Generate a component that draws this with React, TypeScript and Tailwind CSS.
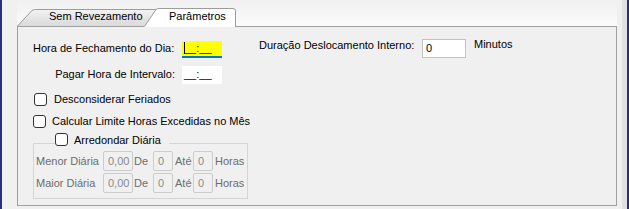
import React from 'react';

const Checkbox: React.FC = () => (
  <span className="block w-[13px] h-[13px] shrink-0 rounded-[3px] border border-[#333333] bg-white" />
);

const DisabledBox: React.FC<{ value: string; wide?: boolean }> = ({ value, wide }) => (
  <div
    className={`${wide ? 'w-[30px]' : 'w-[20px]'} h-[20px] shrink-0 flex items-center pl-[4px] rounded-[2px] border border-[#cccccc] bg-[#f0f0f0] text-[#8a8a8a] leading-[13px]`}
  >
    {value}
  </div>
);

const DiariaRow: React.FC<{ label: string; className?: string }> = ({ label, className }) => (
  <div className={`flex items-center h-[20px] pl-[2px] text-[#6d6d6d] ${className ?? ''}`}>
    <span className="w-[67px] leading-[13px]">{label}</span>
    <DisabledBox value="0,00" wide />
    <span className="ml-[1px] w-[19px] leading-[13px]">De</span>
    <DisabledBox value="0" />
    <span className="ml-[2px] w-[18px] leading-[13px]">Até</span>
    <DisabledBox value="0" />
    <span className="ml-[2px] leading-[13px]">Horas</span>
  </div>
);

export default function App() {
  return (
    <div className="w-[629px] h-[209px] flex bg-[#f0f0f0] border-x-2 border-[#2b2d85] text-[11px] text-black font-['Liberation_Sans',Arial,sans-serif] overflow-hidden">
      <div className="w-[620px] shrink-0 pl-[15px]">
        {/* Tab strip */}
        <div className="w-[600px] h-[26px] flex items-end bg-gradient-to-b from-[#f0f0f0] to-[#fbfbfb]">
          <div className="relative w-[141px] h-[17px] pl-[32px] pt-[1px] leading-[13px]">
            <svg className="absolute inset-0" width="141" height="17" viewBox="0 0 141 17">
              <defs>
                <linearGradient id="inact" x1="0" y1="0" x2="0" y2="1">
                  <stop offset="0" stopColor="#f3f3f3" />
                  <stop offset="1" stopColor="#d9d9d9" />
                </linearGradient>
              </defs>
              <path d="M0 17 L14.5 2 Q16 0.5 18.5 0.5 L141 0.5 L141 17 Z" fill="url(#inact)" />
              <path d="M0.5 17 L14.5 2 Q16 0.5 18.5 0.5 L141 0.5" fill="none" stroke="#9c9c9c" />
            </svg>
            <span className="relative">Sem Revezamento</span>
          </div>
          <div className="relative z-10 -ml-[14px] -mb-px w-[92px] h-[19px] pl-[25px] pt-[2px] leading-[13px]">
            <svg className="absolute inset-0" width="92" height="19" viewBox="0 0 92 19">
              <path d="M0 19 L12 1.5 Q13 0.5 15 0.5 L89 0.5 Q91.5 0.5 91.5 3 L91.5 19 Z" fill="#ffffff" />
              <path d="M0.5 18.5 L12 1.5 Q13 0.5 15 0.5 L89 0.5 Q91.5 0.5 91.5 3 L91.5 19" fill="none" stroke="#9c9c9c" />
            </svg>
            <span className="relative">Parâmetros</span>
          </div>
        </div>

        {/* Panel */}
        <div className="w-[600px] h-[180px] border border-[#a0a0a0] bg-[#f0f0f0] flex flex-col">
          {/* Row 1 */}
          <div className="flex items-start h-[20px] mt-[11px] pl-[15px]">
            <span className="w-[142px] mt-[4px] leading-[13px] whitespace-nowrap">Hora de Fechamento do Dia:</span>
            <div className="relative ml-[7px] mt-[3px] w-[40px] h-[17px] pl-[2px] pt-px bg-[#ffff00] border-b-2 border-[#0078d7] leading-[13px]">
              __:__
              <span className="absolute left-[2px] top-[1px] w-px h-[12px] bg-black" />
            </div>
            <span className="ml-[37px] mt-[1px] w-[163px] leading-[13px] whitespace-nowrap">Duração Deslocamento Interno:</span>
            <div className="mt-[1px] w-[44px] h-[19px] pl-[3px] pt-[2px] bg-white border border-[#c3c3c3] leading-[13px]">0</div>
            <span className="ml-[8px] leading-[13px]">Minutos</span>
          </div>

          {/* Row 2 */}
          <div className="flex items-start h-[18px] mt-[8px] pl-[15px]">
            <span className="w-[142px] mt-[2px] text-right leading-[13px] whitespace-nowrap">Pagar Hora de Intervalo:</span>
            <div className="ml-[7px] w-[40px] h-[18px] pl-[2px] pt-[2px] bg-white leading-[13px]">__:__</div>
          </div>

          {/* Checkboxes */}
          <label className="flex items-center h-[13px] mt-[9px] pl-[16px]">
            <Checkbox />
            <span className="ml-[7px] leading-[13px]">Desconsiderar Feriados</span>
          </label>
          <label className="flex items-center h-[13px] mt-[9px] pl-[15px]">
            <Checkbox />
            <span className="ml-[6px] leading-[13px]">Calcular Limite Horas Excedidas no Mês</span>
          </label>

          {/* Group box */}
          <div className="relative ml-[15px] mt-[15px] w-[215px] h-[56px] border border-[#d5d5d5] flex flex-col">
            <label className="absolute left-[21px] -top-[11px] flex items-center h-[13px] pr-[8px] bg-[#f0f0f0]">
              <Checkbox />
              <span className="ml-[6px] mt-[2px] leading-[13px]">Arredondar Diária</span>
            </label>
            <DiariaRow label="Menor Diária" className="mt-[7px]" />
            <DiariaRow label="Maior Diária" className="mt-[2px]" />
          </div>
        </div>
      </div>
      <div className="w-[5px] shrink-0 bg-[#e1e1e1]" />
    </div>
  );
}
